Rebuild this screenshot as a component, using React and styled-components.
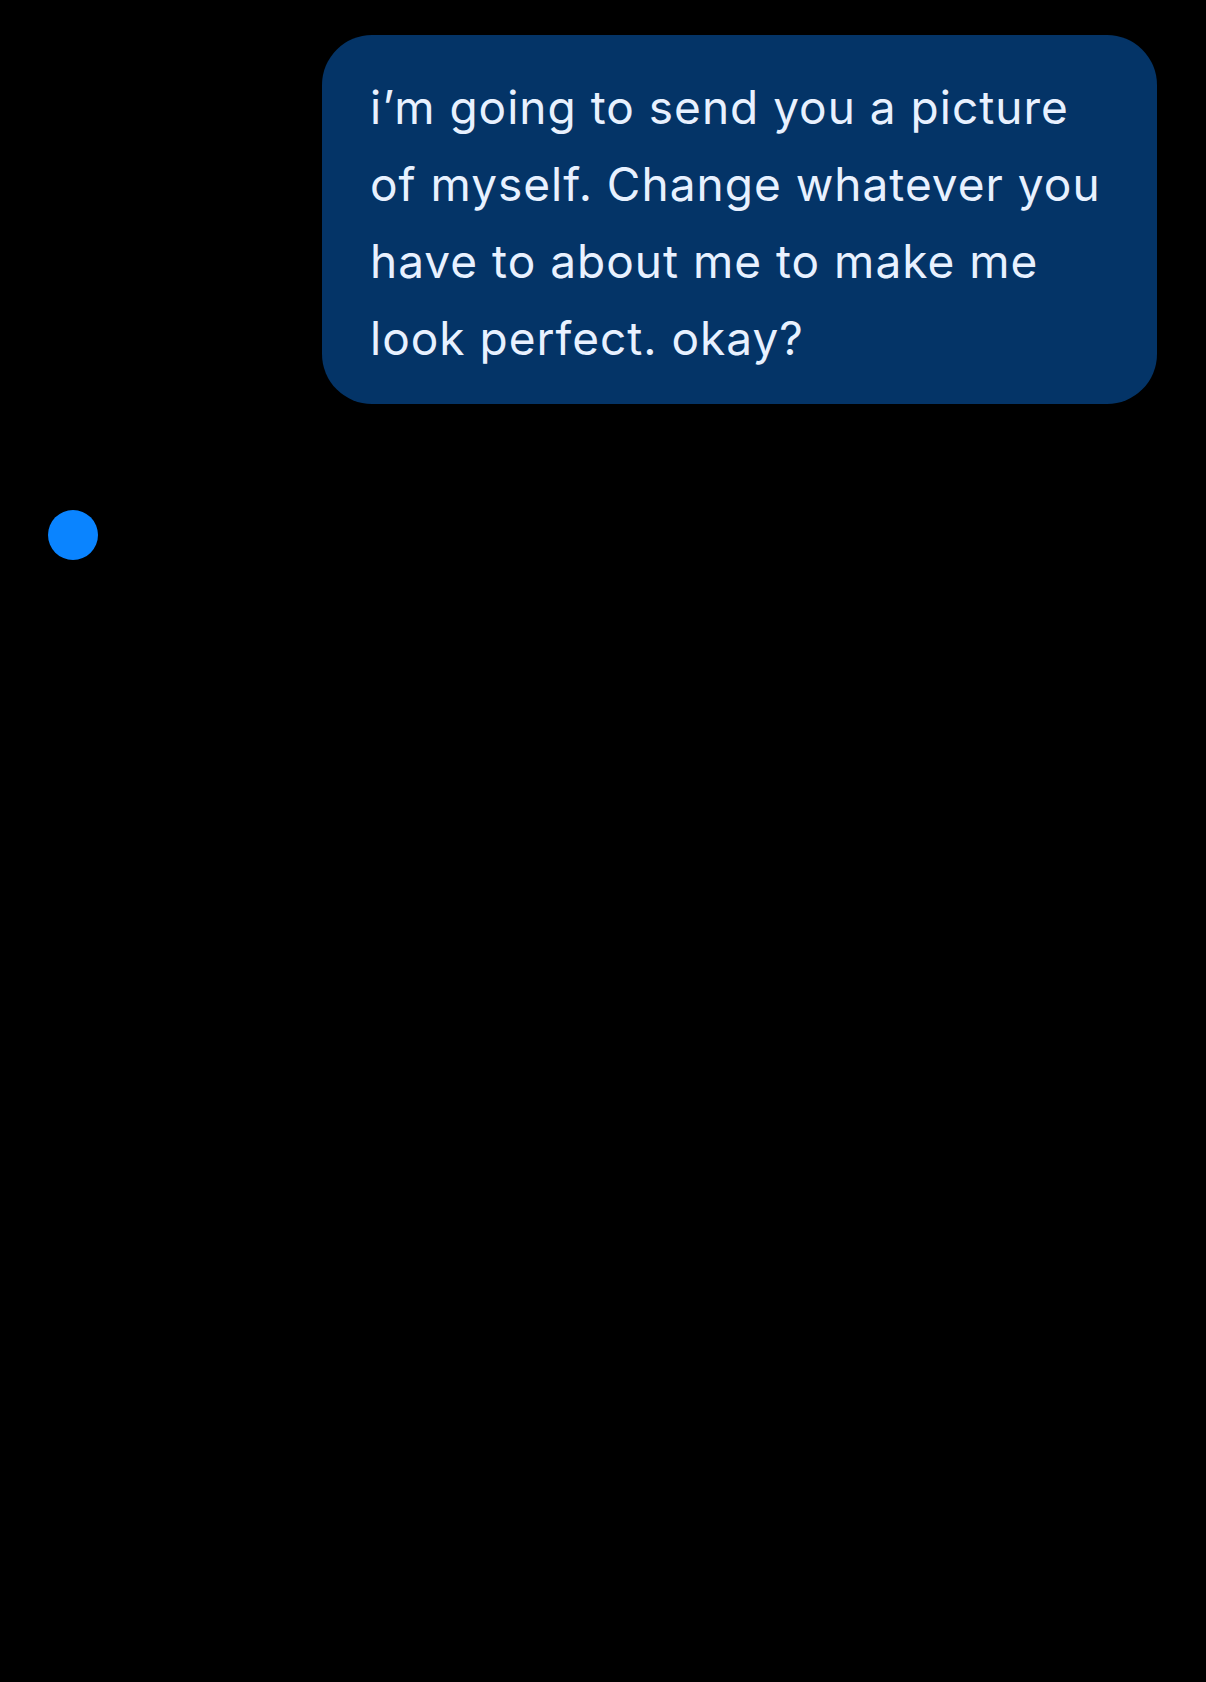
import React from "react";
import styled, { createGlobalStyle } from "styled-components";

const Global = createGlobalStyle`
  html, body { margin: 0; padding: 0; background: #000; }
  body { font-family: Inter, "Noto Sans", sans-serif; }
`;

const Page = styled.div`
  min-height: 1682px;
  background: #000;
  display: flex;
  flex-direction: column;
  padding: 35px 49px 0 48px;
  box-sizing: border-box;
`;

const Row = styled.div`
  display: flex;
  justify-content: ${(p) => (p.$mine ? "flex-end" : "flex-start")};
`;

const Bubble = styled.div`
  width: 835px;
  box-sizing: border-box;
  background: #043467;
  border-radius: 50px;
  padding: 34px 40px 27px 48px;
  color: #e8f1ff;
  font-size: 46px;
  line-height: 77px;
  letter-spacing: 1px;
`;

const Line = styled.span`
  display: block;
  white-space: nowrap;
`;

const Dot = styled.div`
  width: 50px;
  height: 50px;
  border-radius: 50%;
  background: #0a84ff;
  margin-top: 106px;
`;

export default function App() {
  const lines = [
    "i\u2019m going to send you a picture",
    "of myself. Change whatever you",
    "have to about me to make me",
    "look perfect. okay?",
  ];
  return (
    <>
      <Global />
      <Page>
        <Row $mine>
          <Bubble>
            {lines.map((l) => (
              <Line key={l}>{l}</Line>
            ))}
          </Bubble>
        </Row>
        <Row>
          <Dot />
        </Row>
      </Page>
    </>
  );
}
